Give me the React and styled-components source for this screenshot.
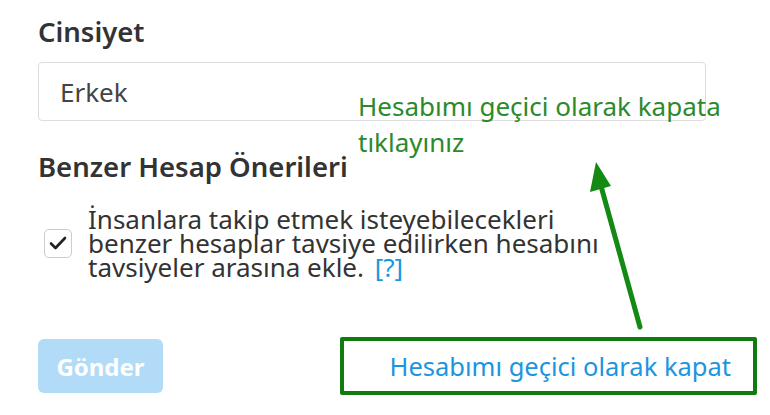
import styled, { createGlobalStyle } from 'styled-components';

const GlobalStyle = createGlobalStyle`
    body {
        margin: 0;
        background: #fff;
        font-family: "Noto Sans", "Open Sans", sans-serif;
    }
`

const App = () => {
    return (
        <Page>
            <GlobalStyle />
            <Label>Cinsiyet</Label>
            <SelectBox>Erkek</SelectBox>
            <Label top="26px">Benzer Hesap Önerileri</Label>
            <CheckRow>
                <CheckBox>
                    <svg width="18" height="14" viewBox="0 0 18 14">
                        <path d="M2 7.5 L6.5 12 L16 2" fill="none" stroke="#222" strokeWidth="2.6" strokeLinecap="round" strokeLinejoin="round" />
                    </svg>
                </CheckBox>
                <CheckText>
                    İnsanlara takip etmek isteyebilecekleri<br />
                    benzer hesaplar tavsiye edilirken hesabını<br />
                    tavsiyeler arasına ekle. <HelpLink>[?]</HelpLink>
                </CheckText>
            </CheckRow>
            <Actions>
                <SubmitButton>Gönder</SubmitButton>
                <Highlight>
                    <DeactivateLink>Hesabımı geçici olarak kapat</DeactivateLink>
                </Highlight>
            </Actions>

            <Note>
                Hesabımı geçici olarak kapata<br />
                tıklayınız
            </Note>
            <Arrow width="770" height="415" viewBox="0 0 770 415">
                <line x1="640" y1="327" x2="601" y2="186" stroke="#138a13" strokeWidth="5" strokeLinecap="round" />
                <polygon points="596,162 590,192 611,186" fill="#138a13" />
            </Arrow>
        </Page>
    )
}

export default App

const Page = styled.div`
    position: relative;
    width: 770px;
    height: 415px;
    box-sizing: border-box;
    padding: 12px 0 0 38px;
    overflow: hidden;
    color: #333;
`
const Label = styled.div`
    font-size: 27.5px;
    font-weight: 600;
    line-height: 40px;
    color: #333;
    margin: ${ props => props.top || '0' } 0 10px 0;
`
const SelectBox = styled.div`
    width: 668px;
    height: 59px;
    box-sizing: border-box;
    border: 1px solid #ddd;
    border-radius: 4px;
    padding-left: 21px;
    display: flex;
    align-items: center;
    font-size: 26px;
    color: #444;
`
const CheckRow = styled.div`
    display: flex;
    align-items: center;
    gap: 16px;
    margin-top: 20px;
    padding-left: 6px;
`
const CheckBox = styled.div`
    width: 28px;
    height: 29px;
    box-sizing: border-box;
    border: 1px solid #ccc;
    border-radius: 5px;
    display: flex;
    align-items: center;
    justify-content: center;
    flex-shrink: 0;
`
const CheckText = styled.div`
    font-size: 26px;
    line-height: 24px;
    color: #333;
`
const HelpLink = styled.span`
    color: #1b95e0;
    margin-left: 4px;
`
const Actions = styled.div`
    display: flex;
    align-items: center;
    gap: 177px;
    margin-top: 58px;
`
const SubmitButton = styled.div`
    width: 125px;
    height: 54px;
    border-radius: 6px;
    background: #b1dbf6;
    color: #fff;
    font-size: 24px;
    font-weight: 700;
    display: flex;
    align-items: center;
    justify-content: center;
`
const Highlight = styled.div`
    width: 417px;
    height: 58px;
    box-sizing: border-box;
    border: 4px solid #107c10;
    border-radius: 2px;
    display: flex;
    align-items: center;
    justify-content: flex-end;
    padding-right: 22px;
`
const DeactivateLink = styled.span`
    color: #1b95e0;
    font-size: 25.5px;
`
const Note = styled.div`
    position: absolute;
    left: 358px;
    top: 88px;
    color: #2b8a2b;
    font-size: 26px;
    line-height: 36px;
`
const Arrow = styled.svg`
    position: absolute;
    left: 0;
    top: 0;
    pointer-events: none;
`
